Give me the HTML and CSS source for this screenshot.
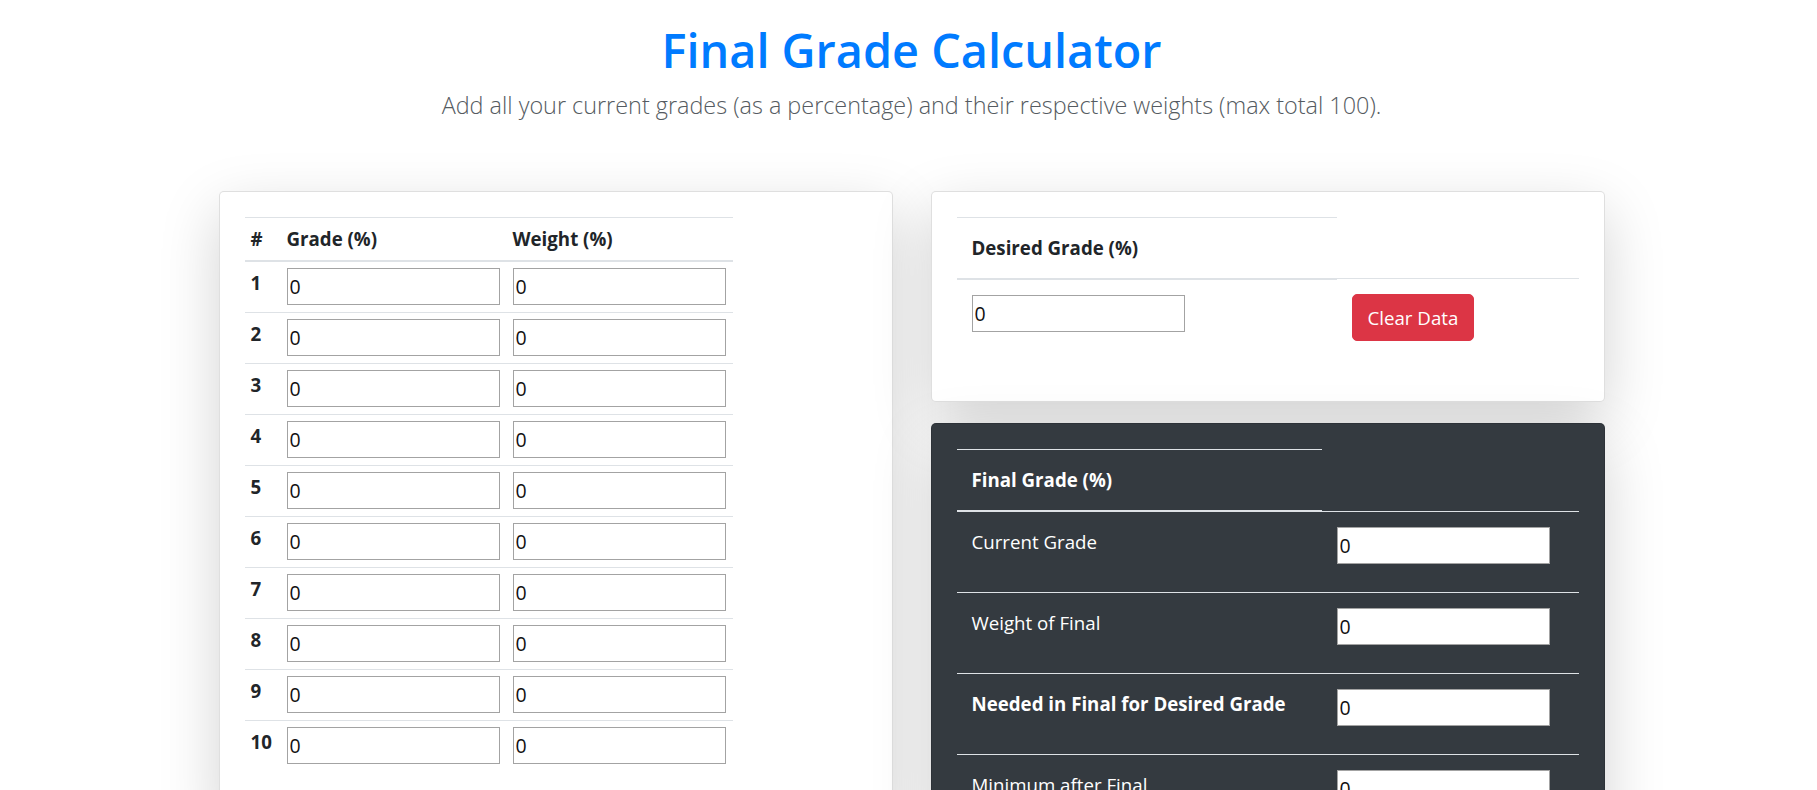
FILE: index.html
```html
<!DOCTYPE html>
<html lang="en">
<head>
<meta charset="utf-8">
<title>Final Grade Calculator</title>
<link rel="stylesheet" href="styles.css">
</head>
<body>
<header class="intro">
  <h1 class="title">Final Grade Calculator</h1>
  <p class="lead">Add all your current grades (as a percentage) and their respective weights (max total 100).</p>
</header>
<main class="grid">
  <section class="card">
    <table class="tbl tbl-sm grades">
      <colgroup><col class="c-num"><col class="c-in"><col class="c-in"></colgroup>
      <thead>
        <tr><th>#</th><th>Grade (%)</th><th>Weight (%)</th></tr>
      </thead>
      <tbody>
        <tr><th>1</th><td><input type="text" value="0"></td><td><input type="text" value="0"></td></tr>
        <tr><th>2</th><td><input type="text" value="0"></td><td><input type="text" value="0"></td></tr>
        <tr><th>3</th><td><input type="text" value="0"></td><td><input type="text" value="0"></td></tr>
        <tr><th>4</th><td><input type="text" value="0"></td><td><input type="text" value="0"></td></tr>
        <tr><th>5</th><td><input type="text" value="0"></td><td><input type="text" value="0"></td></tr>
        <tr><th>6</th><td><input type="text" value="0"></td><td><input type="text" value="0"></td></tr>
        <tr><th>7</th><td><input type="text" value="0"></td><td><input type="text" value="0"></td></tr>
        <tr><th>8</th><td><input type="text" value="0"></td><td><input type="text" value="0"></td></tr>
        <tr><th>9</th><td><input type="text" value="0"></td><td><input type="text" value="0"></td></tr>
        <tr><th>10</th><td><input type="text" value="0"></td><td><input type="text" value="0"></td></tr>
      </tbody>
    </table>
  </section>
  <div class="side">
    <section class="card">
      <table class="tbl desired">
        <colgroup><col class="c-a"><col class="c-b"></colgroup>
        <thead>
          <tr><th>Desired Grade (%)</th></tr>
        </thead>
        <tbody>
          <tr><td><input type="text" value="0"></td><td><button type="button" class="btn-danger">Clear Data</button></td></tr>
        </tbody>
      </table>
    </section>
    <section class="card card-dark">
      <table class="tbl results">
        <colgroup><col class="c-a"><col class="c-b"></colgroup>
        <thead>
          <tr><th>Final Grade (%)</th></tr>
        </thead>
        <tbody>
          <tr><td>Current Grade</td><td><input type="text" value="0"></td></tr>
          <tr><td>Weight of Final</td><td><input type="text" value="0"></td></tr>
          <tr><th>Needed in Final for Desired Grade</th><td><input type="text" value="0"></td></tr>
          <tr><td>Minimum after Final</td><td><input type="text" value="0"></td></tr>
        </tbody>
      </table>
    </section>
  </div>
</main>
</body>
</html>
```

FILE: styles.css
```css
* { box-sizing: border-box; }

html, body {
  margin: 0;
  background: #fff;
}

body {
  padding: 0 0 0 6px;
  font-family: "Open Sans", "Noto Sans", sans-serif;
  font-size: 18.7px;
  line-height: 30px;
  color: #212529;
}

.intro {
  text-align: center;
  padding-top: 20px;
}

.title {
  margin: 0 0 7px;
  font-size: 46.8px;
  line-height: 60px;
  font-weight: 600;
  color: #007bff;
}

.lead {
  margin: 0;
  font-size: 23.4px;
  line-height: 37.5px;
  font-weight: 300;
  color: #555b61;
}

.grid {
  width: 1386px;
  margin: 66px auto 0;
  display: grid;
  grid-template-columns: 1fr 1fr;
  column-gap: 38px;
  align-items: start;
}

.side {
  display: flex;
  flex-direction: column;
  gap: 21px;
}

.card {
  background: #fff;
  border: 1px solid rgba(0, 0, 0, 0.125);
  border-radius: 5px;
  padding: 25px;
  box-shadow: 0 20px 60px rgba(0, 0, 0, 0.175);
}

.card-dark {
  background: #343a40;
  color: #fff;
}

.tbl {
  border-collapse: collapse;
  table-layout: fixed;
  margin-bottom: 20px;
}

.tbl th,
.tbl td {
  padding: 15px;
  text-align: left;
  vertical-align: top;
  border-top: 1px solid #dee2e6;
  white-space: nowrap;
}

.tbl th { font-weight: 700; }

.tbl thead th {
  vertical-align: bottom;
  border-bottom: 2px solid #dee2e6;
}

.tbl input {
  display: block;
  width: 213px;
  height: 37px;
  margin: 0;
  padding: 0 2px;
  border: 1px solid #a3a3a3;
  border-radius: 0;
  background: #fff;
  font: inherit;
  font-size: 19.5px;
  line-height: normal;
  color: #111;
}

/* Left grades table */
.grades { width: 488px; }
.grades .c-num { width: 36px; }
.grades .c-in { width: 226px; }
.grades th,
.grades td { padding: 6px 6px 7px; }
.grades thead th { padding-bottom: 6px; }

/* Desired grade */
.desired { width: 100%; }
.desired .c-a { width: 380px; }
.desired .c-b { width: 242px; }

.btn-danger {
  display: inline-block;
  padding: 7.5px 15px;
  border: 1px solid #dc3545;
  border-radius: 5px;
  background: #dc3545;
  color: #fff;
  font: inherit;
  line-height: 30px;
  cursor: pointer;
}

/* Results */
.results { width: 100%; }
.results .c-a { width: 365px; }
.results .c-b { width: 257px; }
.results tbody td,
.results tbody th { padding-bottom: 28px; }
```
